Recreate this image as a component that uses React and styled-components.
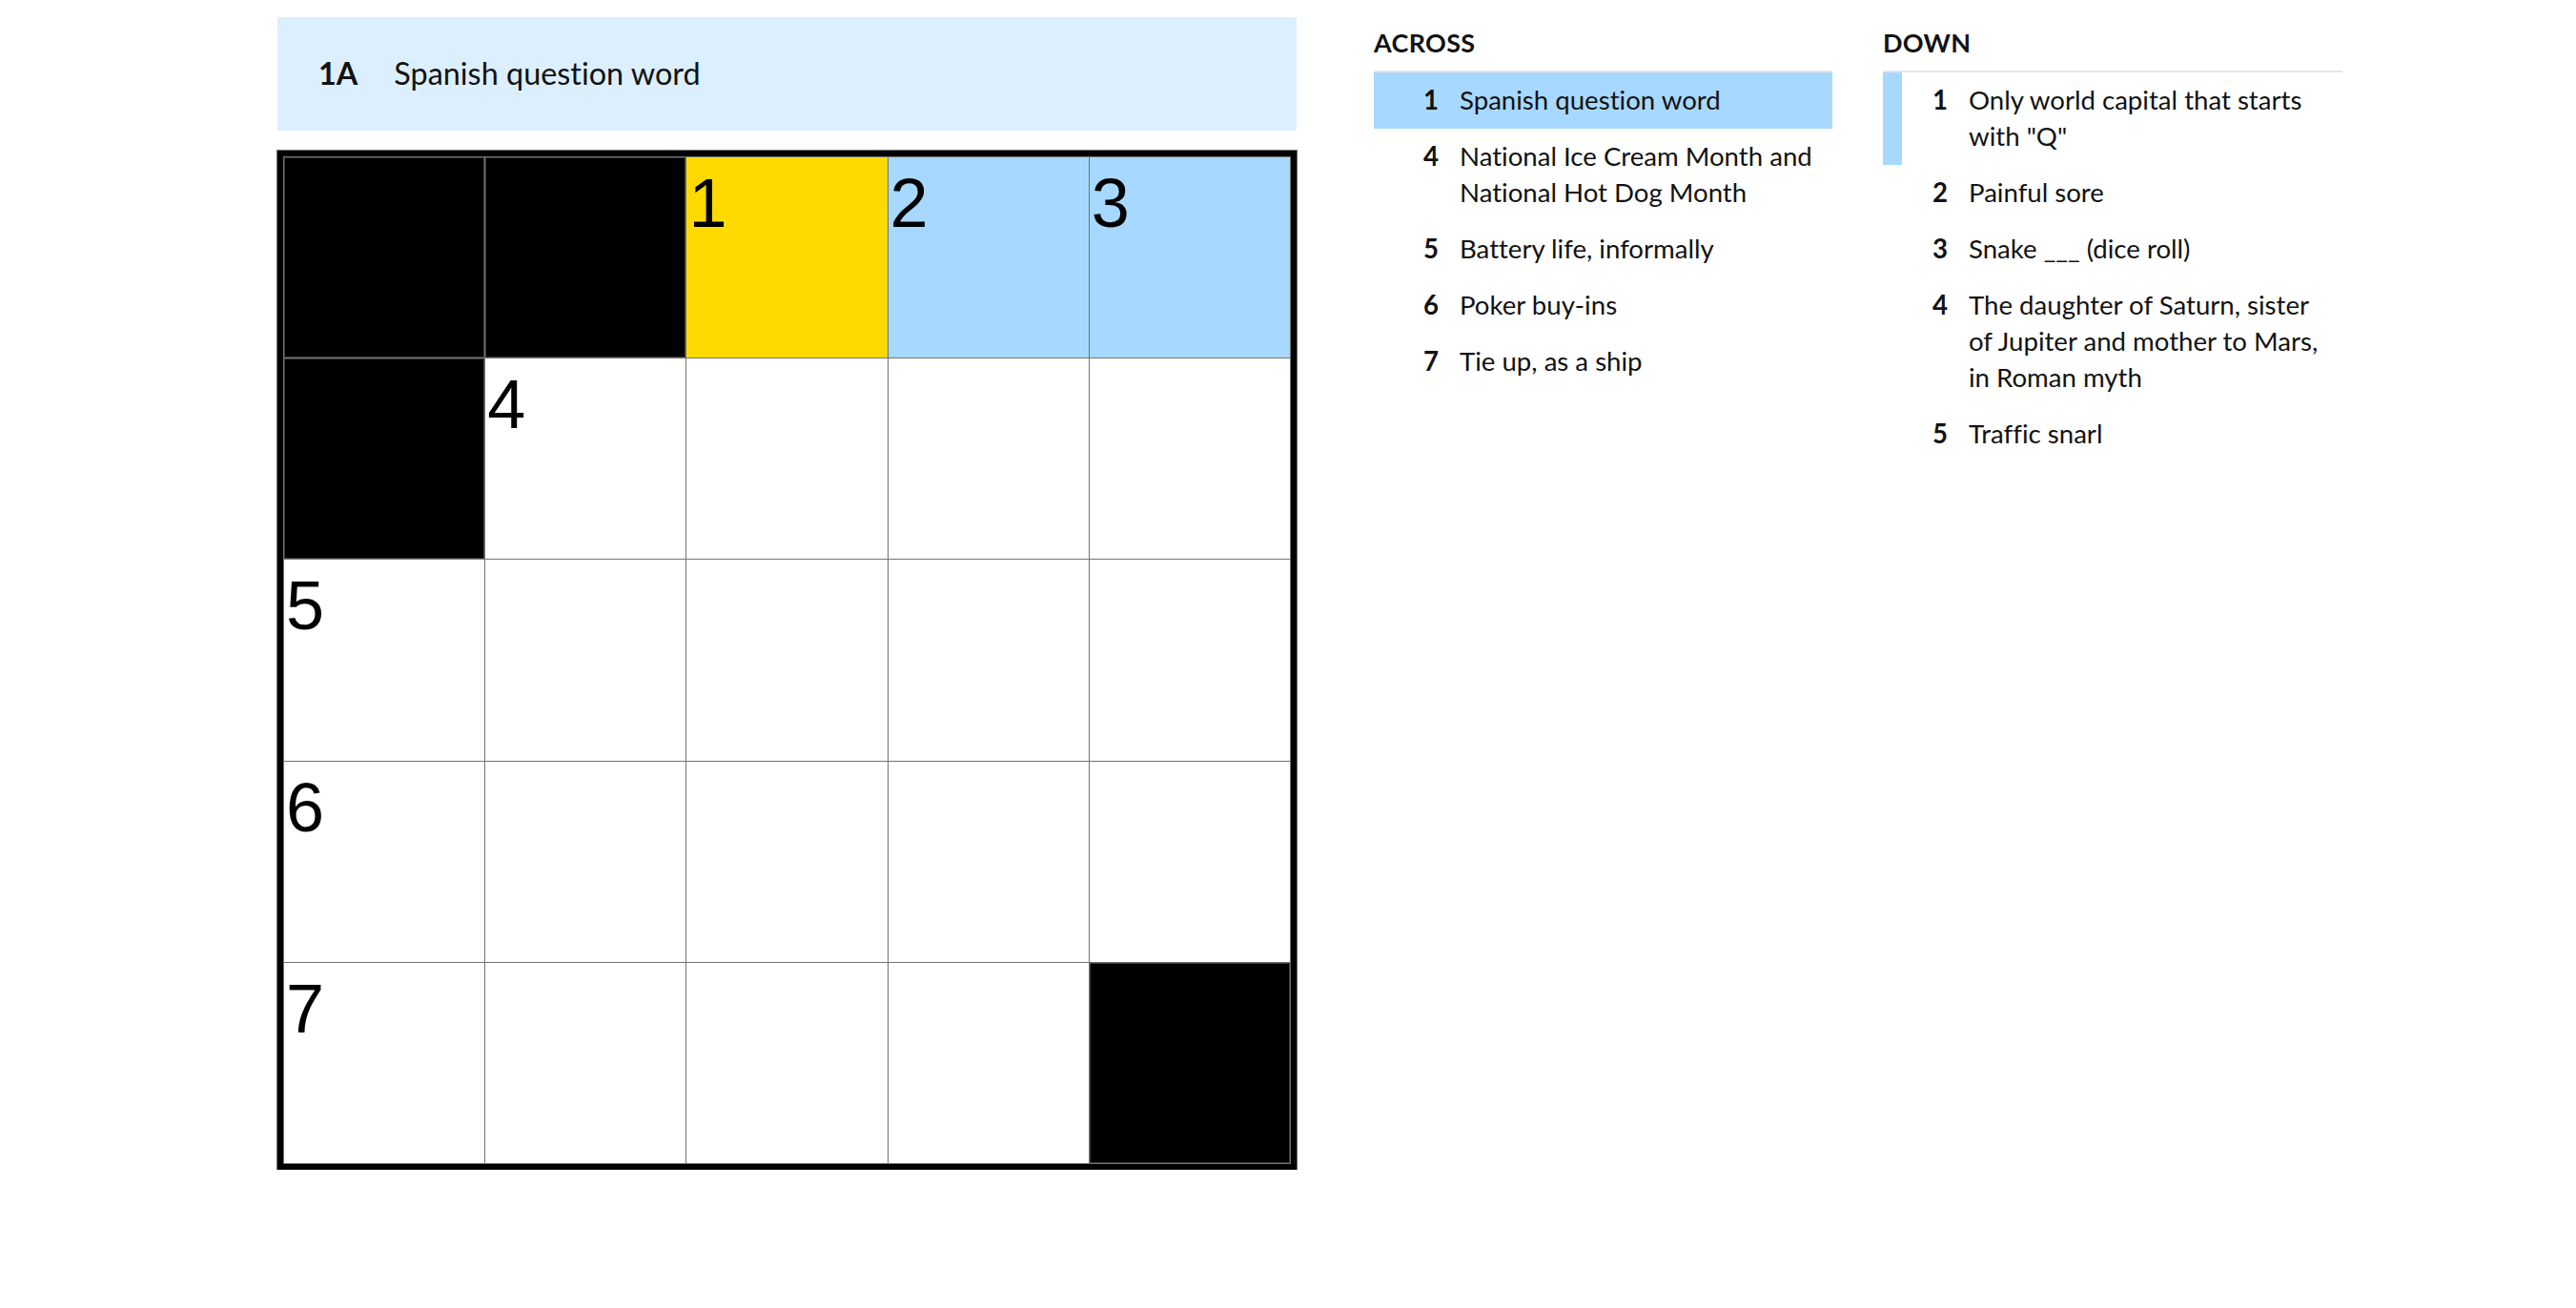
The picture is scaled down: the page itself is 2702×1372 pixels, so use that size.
import React from "react";
import styled, { createGlobalStyle } from "styled-components";

const GlobalStyle = createGlobalStyle`
  html, body {
    margin: 0;
    padding: 0;
    background: #ffffff;
  }
  body {
    font-family: Lato, "Noto Sans", "Liberation Sans", sans-serif;
    font-variant-ligatures: none;
    color: #121212;
  }
`;

const Page = styled.div`
  display: flex;
  align-items: flex-start;
  padding: 18px 0 0 291px;
`;

const Board = styled.section`
  width: 1069px;
  display: flex;
  flex-direction: column;
  gap: 21px;
`;

const ClueBar = styled.div`
  height: 119px;
  background: #dcefff;
  display: flex;
  align-items: center;
  padding-left: 43px;
  font-size: 32.4px;
  line-height: 1.2;
`;

const BarLabel = styled.span`
  font-weight: 700;
  margin-right: 38px;
`;

const BarText = styled.span`
  font-weight: 400;
`;

const Grid = styled.div`
  width: 1069px;
  height: 1069px;
  box-sizing: border-box;
  border: 6px solid #000;
  outline: 1px solid #6f6f6f;
  padding: 1px;
  background: #727272;
  display: grid;
  grid-template-columns: repeat(5, 1fr);
  grid-template-rows: repeat(5, 1fr);
  gap: 1px;
`;

const cellFill = {
  block: "#000000",
  selected: "#ffda00",
  word: "#a7d8ff",
  open: "#ffffff",
};

const Cell = styled.div`
  background: ${(p) => cellFill[p.$kind]};
  box-shadow: ${(p) => (p.$kind === "block" ? "inset 0 0 0 1px #3c3c3c" : "none")};
  padding: 12px 0 0 2px;
  font-family: "Liberation Sans", Arial, sans-serif;
  font-size: 72px;
  line-height: 1;
  color: #000;
`;

const ClueColumn = styled.section`
  width: ${(p) => p.$width}px;
  margin-left: ${(p) => p.$offset}px;
`;

const ColumnTitle = styled.h3`
  margin: 11px 0 13px;
  font-size: 27px;
  line-height: 32px;
  font-weight: 700;
  letter-spacing: 0.3px;
  text-transform: uppercase;
`;

const ClueList = styled.ol`
  list-style: none;
  margin: 0;
  padding: 0;
  border-top: 2px solid #e6e6e6;
`;

const ClueItem = styled.li`
  display: flex;
  align-items: flex-start;
  padding: 9.5px 8px 11.5px 0;
  border-left: 20px solid ${(p) => (p.$state === "cross" ? "#a7d8ff" : "transparent")};
  background: ${(p) => (p.$state === "active" ? "#a7d8ff" : "transparent")};
  font-size: 27.6px;
  line-height: 38px;
`;

const ClueNumber = styled.span`
  flex: 0 0 48px;
  text-align: right;
  font-weight: 700;
  margin-right: 22px;
`;

const ClueText = styled.span`
  flex: 1;
`;

const layout = [
  ["block", "block", "selected", "word", "word"],
  ["block", "open", "open", "open", "open"],
  ["open", "open", "open", "open", "open"],
  ["open", "open", "open", "open", "open"],
  ["open", "open", "open", "open", "block"],
];

const numbers = {
  "0-2": 1,
  "0-3": 2,
  "0-4": 3,
  "1-1": 4,
  "2-0": 5,
  "3-0": 6,
  "4-0": 7,
};

const across = [
  { n: 1, text: "Spanish question word", state: "active" },
  { n: 4, text: "National Ice Cream Month and National Hot Dog Month" },
  { n: 5, text: "Battery life, informally" },
  { n: 6, text: "Poker buy-ins" },
  { n: 7, text: "Tie up, as a ship" },
];

const down = [
  { n: 1, text: 'Only world capital that starts with "Q"', state: "cross" },
  { n: 2, text: "Painful sore" },
  { n: 3, text: "Snake ___ (dice roll)" },
  { n: 4, text: "The daughter of Saturn, sister of Jupiter and mother to Mars, in Roman myth" },
  { n: 5, text: "Traffic snarl" },
];

function Clues({ title, items, width, offset }) {
  return (
    <ClueColumn $width={width} $offset={offset}>
      <ColumnTitle>{title}</ColumnTitle>
      <ClueList>
        {items.map((c) => (
          <ClueItem key={c.n} $state={c.state}>
            <ClueNumber>{c.n}</ClueNumber>
            <ClueText>{c.text}</ClueText>
          </ClueItem>
        ))}
      </ClueList>
    </ClueColumn>
  );
}

export default function App() {
  return (
    <>
      <GlobalStyle />
      <Page>
        <Board>
          <ClueBar>
            <BarLabel>1A</BarLabel>
            <BarText>Spanish question word</BarText>
          </ClueBar>
          <Grid>
            {layout.map((row, r) =>
              row.map((kind, c) => (
                <Cell key={`${r}-${c}`} $kind={kind}>
                  {numbers[`${r}-${c}`] ?? ""}
                </Cell>
              ))
            )}
          </Grid>
        </Board>
        <Clues title="Across" items={across} width={481} offset={81} />
        <Clues title="Down" items={down} width={482} offset={53} />
      </Page>
    </>
  );
}
